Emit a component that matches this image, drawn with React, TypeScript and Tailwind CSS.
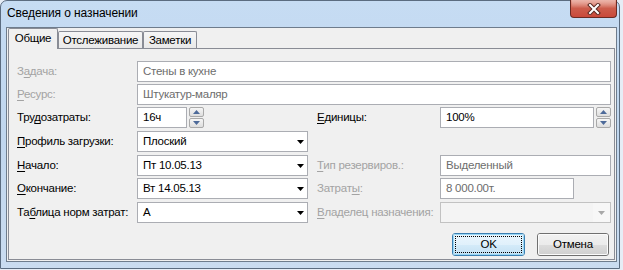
import React from "react";

const U = ({ children }: { children: React.ReactNode }) => (
  <span className="underline decoration-1 underline-offset-[2px]">{children}</span>
);

function Label({
  children,
  disabled,
  className,
}: {
  children: React.ReactNode;
  disabled?: boolean;
  className: string;
}) {
  return (
    <div
      className={`shrink-0 whitespace-nowrap ${disabled ? "text-[#a3a3a3]" : "text-black"} ${className}`}
    >
      {children}
    </div>
  );
}

function TextBox({
  value,
  disabled,
  className,
}: {
  value: string;
  disabled?: boolean;
  className: string;
}) {
  return (
    <div
      className={`h-[21px] shrink-0 flex items-center pl-[5px] bg-white border border-[#abadb3] whitespace-nowrap ${
        disabled ? "text-[#6d6d6d]" : "text-black"
      } ${className}`}
    >
      {value}
    </div>
  );
}

function Arrow({ color }: { color: string }) {
  return (
    <svg width="7" height="4" viewBox="0 0 7 4" className="shrink-0">
      <polygon points="0,0 7,0 3.5,4" fill={color} />
    </svg>
  );
}

function Combo({
  value,
  disabled,
  className,
}: {
  value: string;
  disabled?: boolean;
  className: string;
}) {
  if (disabled) {
    return (
      <div
        className={`h-[21px] shrink-0 flex items-stretch border border-[#c2c2c2] bg-[#f4f4f4] ${className}`}
      >
        <div className="flex-1" />
        <div className="w-[17px] bg-[#f7f7f7] flex items-center justify-center">
          <Arrow color="#a8a8a8" />
        </div>
      </div>
    );
  }
  return (
    <div
      className={`h-[21px] shrink-0 flex items-center justify-between pl-[5px] pr-[3px] bg-white border border-[#abadb3] whitespace-nowrap ${className}`}
    >
      <span>{value}</span>
      <Arrow color="#000000" />
    </div>
  );
}

function SpinBtn({ up }: { up?: boolean }) {
  return (
    <div className="h-[10px] w-[15px] rounded-[2px] border border-[#a9a9a9] bg-gradient-to-b from-[#f6f6f6] to-[#dedede] flex items-center justify-center">
      <svg width="7" height="4" viewBox="0 0 7 4">
        {up ? (
          <polygon points="0,4 7,4 3.5,0" fill="#4d6a99" />
        ) : (
          <polygon points="0,0 7,0 3.5,4" fill="#4d6a99" />
        )}
      </svg>
    </div>
  );
}

function Spinner() {
  return (
    <div className="ml-[2px] flex flex-col gap-[1px] shrink-0">
      <SpinBtn up />
      <SpinBtn />
    </div>
  );
}

function WinButton({
  children,
  def,
  className,
}: {
  children: React.ReactNode;
  def?: boolean;
  className: string;
}) {
  return (
    <div
      className={`relative h-[23px] rounded-[3px] border ${
        def ? "border-[#3c7fb1]" : "border-[#707070]"
      } overflow-hidden ${className}`}
    >
      <div className="absolute inset-0 flex flex-col">
        <div
          className={`h-1/2 bg-gradient-to-b ${
            def ? "from-[#eaf6fd] to-[#e0f0fb]" : "from-[#f2f2f2] to-[#ebebeb]"
          }`}
        />
        <div
          className={`h-1/2 bg-gradient-to-b ${
            def ? "from-[#d4ebf9] to-[#c4e0f3]" : "from-[#dddddd] to-[#cfcfcf]"
          }`}
        />
      </div>
      <div
        className={`absolute inset-0 rounded-[2px] border ${
          def ? "border-[#97d6f5]" : "border-[#fbfbfb]"
        }`}
      />
      {def && <div className="absolute inset-[2px] border border-dotted border-black" />}
      <div className="relative h-full flex items-center justify-center text-black">{children}</div>
    </div>
  );
}

export default function App() {
  return (
    <div className="w-[623px] h-[270px] bg-[#e6edf6] overflow-hidden font-['Liberation_Sans',Arial,sans-serif] text-[11.5px] tracking-[-0.25px] leading-[15px]">
      <div className="relative w-[620px] h-[269px] rounded-t-[7px] border border-[#5b6c80] bg-gradient-to-b from-[#c6dcf3] via-[#c0d6ee] to-[#cadcf0] flex flex-col">
        <div className="h-[26px] flex items-center pl-[6px] pb-[1px] text-black shrink-0 text-[12px] tracking-[-0.1px]">
          Сведения о назначении
        </div>

        <div className="absolute top-[-1px] right-[2px] w-[47px] h-[18px] rounded-b-[4px] border border-[#6b2a22] border-t-0 bg-gradient-to-b from-[#e6a497] via-[#cc5c4b] to-[#c9493a] flex items-center justify-center">
          <div className="absolute inset-x-[1px] top-0 h-[8px] rounded-b-[2px] bg-gradient-to-b from-[#f0c0b6]/60 to-transparent" />
          <svg width="14" height="12" viewBox="0 0 14 12" className="relative">
            <path d="M3 2 L11 10 M11 2 L3 10" stroke="#5a2a22" strokeWidth="4" strokeLinecap="square" />
            <path d="M3 2 L11 10 M11 2 L3 10" stroke="#ffffff" strokeWidth="2" strokeLinecap="square" />
          </svg>
        </div>

        <div className="ml-[5px] mr-[2px] mb-[6px] flex-1 border border-[#6e7c8c] bg-[#f0f0f0] flex flex-col pl-[1px] pr-[1px] pb-[1px]">
          <div className="h-[20px] flex items-end shrink-0 relative z-10">
            <div className="h-[21px] -mb-[1px] w-[50px] border border-b-0 border-[#898c95] bg-[#f0f0f0] flex items-center justify-center pb-[2px] rounded-t-[2px]">
              Общие
            </div>
            <div className="h-[17px] w-[85px] border border-b-0 border-[#898c95] bg-gradient-to-b from-[#f6f6f6] to-[#e9e9e9] flex items-center justify-center rounded-t-[2px]">
              Отслеживание
            </div>
            <div className="h-[17px] w-[54px] border border-b-0 border-[#898c95] bg-gradient-to-b from-[#f6f6f6] to-[#e9e9e9] flex items-center justify-center rounded-t-[2px]">
              Заметки
            </div>
          </div>

          <div className="flex-1 border border-[#898c95] bg-[#f0f0f0] pl-[8px] pt-[12px] flex flex-col">
            <div className="flex items-center">
              <Label disabled className="w-[120px]">
                З<U>а</U>дача:
              </Label>
              <TextBox disabled value="Стены в кухне" className="w-[474px]" />
            </div>

            <div className="flex items-center mt-[2px]">
              <Label disabled className="w-[120px]">
                <U>Р</U>есурс:
              </Label>
              <TextBox disabled value="Штукатур-маляр" className="w-[474px]" />
            </div>

            <div className="flex items-center mt-[2px]">
              <Label className="w-[120px]">
                Тру<U>д</U>озатраты:
              </Label>
              <div className="w-[171px] flex items-center shrink-0">
                <TextBox value="16ч" className="w-[50px]" />
                <Spinner />
              </div>
              <div className="w-[9px] shrink-0" />
              <Label className="w-[123px]">
                <U>Е</U>диницы:
              </Label>
              <div className="w-[171px] flex items-center shrink-0">
                <TextBox value="100%" className="w-[154px]" />
                <Spinner />
              </div>
            </div>

            <div className="flex items-center mt-[3px]">
              <Label className="w-[120px]">
                <U>П</U>рофиль загрузки:
              </Label>
              <Combo value="Плоский" className="w-[171px]" />
            </div>

            <div className="flex items-center mt-[3px]">
              <Label className="w-[120px]">
                <U>Н</U>ачало:
              </Label>
              <Combo value="Пт 10.05.13" className="w-[171px]" />
              <div className="w-[9px] shrink-0" />
              <Label disabled className="w-[123px]">
                <U>Т</U>ип резервиров.:
              </Label>
              <TextBox disabled value="Выделенный" className="w-[171px]" />
            </div>

            <div className="flex items-center mt-[2px]">
              <Label className="w-[120px]">
                <U>О</U>кончание:
              </Label>
              <Combo value="Вт 14.05.13" className="w-[171px]" />
              <div className="w-[9px] shrink-0" />
              <Label disabled className="w-[123px]">
                Затрат<U>ы</U>:
              </Label>
              <TextBox disabled value="8 000.00т." className="w-[134px]" />
            </div>

            <div className="flex items-center mt-[3px]">
              <Label className="w-[120px]">
                Та<U>б</U>лица норм затрат:
              </Label>
              <Combo value="A" className="w-[171px]" />
              <div className="w-[9px] shrink-0" />
              <Label disabled className="w-[123px]">
                <U>В</U>ладелец назначения:
              </Label>
              <Combo disabled value="" className="w-[171px]" />
            </div>

            <div className="flex justify-end gap-[12px] pr-[5px] mt-[10px]">
              <WinButton def className="w-[73px]">
                OK
              </WinButton>
              <WinButton className="w-[72px]">Отмена</WinButton>
            </div>
          </div>
        </div>
      </div>
    </div>
  );
}
